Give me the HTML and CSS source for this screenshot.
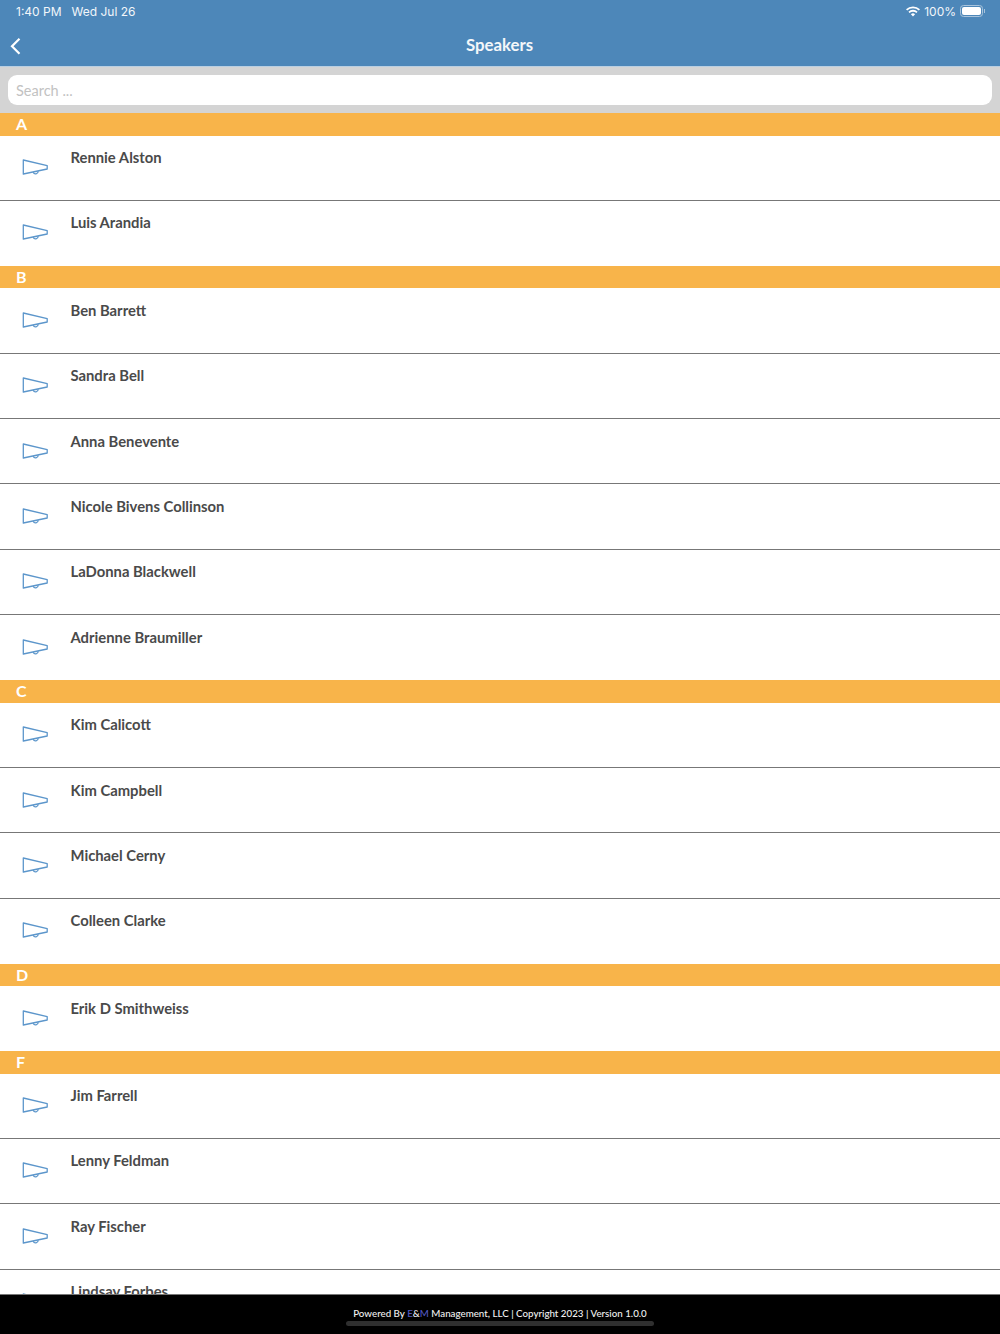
FILE: index.html
```html
<!DOCTYPE html>
<html lang="en">
<head>
<meta charset="utf-8">
<title>Speakers</title>
<link rel="stylesheet" href="styles.css">
</head>
<body>
<svg class="defs" width="0" height="0" aria-hidden="true">
  <symbol id="horn" viewBox="0 0 28 18">
    <path d="M2.3 1 L26.2 6.7 V10 L2.3 15 Z" fill="none" stroke="currentColor" stroke-width="1.3" stroke-linejoin="round"/>
    <path d="M12.2 13.3 A2.6 2.6 0 0 0 17.2 12.3" fill="none" stroke="currentColor" stroke-width="1.3"/>
  </symbol>
</svg>
<div class="app">
  <header class="topbar">
    <div class="status">
      <span class="status-time">1:40 PM</span>
      <span class="status-date">Wed Jul 26</span>
      <span class="status-right">
        <svg class="wifi" width="14" height="11" viewBox="0 0 14 11"><path d="M7 10.5 L4.9 8.3 A3 3 0 0 1 9.1 8.3 Z M3.6 7 L2.4 5.7 A6.6 6.6 0 0 1 11.6 5.7 L10.4 7 A4.9 4.9 0 0 0 3.6 7 Z M1.2 4.6 L0 3.3 A10 10 0 0 1 14 3.3 L12.8 4.6 A8.3 8.3 0 0 0 1.2 4.6 Z" fill="#fff"/></svg>
        <span>100%</span>
        <span class="battery"><span class="battery-fill"></span></span>
      </span>
    </div>
    <div class="nav">
      <svg class="back" width="12" height="18" viewBox="0 0 12 18"><path d="M9.5 1.8 L2 9.2 L9.5 16.8" fill="none" stroke="#fff" stroke-width="2.2"/></svg>
      <h1 class="title">Speakers</h1>
    </div>
  </header>
  <div class="searchbar"><div class="search">Search ...</div></div>
  <main class="list">
    <div class="letter">A</div>
    <div class="row"><svg class="horn"><use href="#horn"/></svg><span class="name">Rennie Alston</span></div>
    <div class="row"><svg class="horn"><use href="#horn"/></svg><span class="name">Luis Arandia</span></div>
    <div class="letter">B</div>
    <div class="row"><svg class="horn"><use href="#horn"/></svg><span class="name">Ben Barrett</span></div>
    <div class="row"><svg class="horn"><use href="#horn"/></svg><span class="name">Sandra Bell</span></div>
    <div class="row"><svg class="horn"><use href="#horn"/></svg><span class="name">Anna Benevente</span></div>
    <div class="row"><svg class="horn"><use href="#horn"/></svg><span class="name">Nicole Bivens Collinson</span></div>
    <div class="row"><svg class="horn"><use href="#horn"/></svg><span class="name">LaDonna Blackwell</span></div>
    <div class="row"><svg class="horn"><use href="#horn"/></svg><span class="name">Adrienne Braumiller</span></div>
    <div class="letter">C</div>
    <div class="row"><svg class="horn"><use href="#horn"/></svg><span class="name">Kim Calicott</span></div>
    <div class="row"><svg class="horn"><use href="#horn"/></svg><span class="name">Kim Campbell</span></div>
    <div class="row"><svg class="horn"><use href="#horn"/></svg><span class="name">Michael Cerny</span></div>
    <div class="row"><svg class="horn"><use href="#horn"/></svg><span class="name">Colleen Clarke</span></div>
    <div class="letter">D</div>
    <div class="row"><svg class="horn"><use href="#horn"/></svg><span class="name">Erik D Smithweiss</span></div>
    <div class="letter">F</div>
    <div class="row"><svg class="horn"><use href="#horn"/></svg><span class="name">Jim Farrell</span></div>
    <div class="row"><svg class="horn"><use href="#horn"/></svg><span class="name">Lenny Feldman</span></div>
    <div class="row"><svg class="horn"><use href="#horn"/></svg><span class="name">Ray Fischer</span></div>
    <div class="row"><svg class="horn"><use href="#horn"/></svg><span class="name">Lindsay Forbes</span></div>
  </main>
  <footer class="footer">
    <p class="credit">Powered By <span class="brand">E</span>&amp;<span class="brand">M</span> Management, LLC | Copyright 2023 | Version 1.0.0</p>
    <div class="home"></div>
  </footer>
</div>
</body>
</html>
```
FILE: styles.css
```css
* { box-sizing: border-box; }
html, body { margin: 0; padding: 0; background: #fff; }
.defs { display: block; height: 0; }
.app {
  width: 1000px;
  height: 1334px;
  display: flex;
  flex-direction: column;
  overflow: hidden;
  font-family: Lato, "Liberation Sans", sans-serif;
}
.topbar {
  height: 67px;
  flex: none;
  background: #4d87b9;
  border-bottom: 1px solid #b9cfe2;
  color: #fff;
  padding: 3px 15px 0 16px;
}
.status {
  height: 16px;
  display: flex;
  align-items: center;
  font-family: Inter, "Liberation Sans", sans-serif;
  font-size: 12px;
  color: #f2f6fa;
}
.status-date { margin-left: 10px; }
.status-right {
  margin-left: auto;
  display: flex;
  align-items: center;
  gap: 4px;
}
.battery {
  width: 23px;
  height: 12px;
  margin-right: 2px;
  border: 1px solid #a9c4dc;
  border-radius: 3.5px;
  padding: 1px;
  display: block;
  position: relative;
}
.battery::after {
  content: "";
  position: absolute;
  right: -3px;
  top: 3px;
  width: 1px;
  height: 4px;
  background: #a9c4dc;
}
.battery-fill {
  display: block;
  height: 100%;
  background: #fff;
  border-radius: 2px;
}
.nav {
  height: 47px;
  padding-top: 4px;
  display: flex;
  align-items: center;
  justify-content: center;
  position: relative;
}
.back { position: absolute; left: -6px; top: 18px; }
.title {
  margin: 0 2px 0 0;
  font-size: 16.8px;
  font-weight: 700;
  line-height: 20px;
  color: #f4f7fa;
}
.searchbar {
  flex: none;
  height: 46px;
  padding: 8px;
  background: #d4d4d4;
}
.search {
  height: 30px;
  border-radius: 9px;
  background: #fff;
  padding: 1px 8px 0;
  font-size: 14.5px;
  line-height: 30px;
  color: #c2c2c2;
}
.list { flex: 1; min-height: 0; overflow: hidden; }
.letter {
  height: 22.5px;
  background: #f8b44a;
  color: #fff;
  font-size: 16px;
  font-weight: 700;
  line-height: 22px;
  padding-left: 16px;
}
.row {
  height: 65.4px;
  display: flex;
  align-items: flex-start;
  border-bottom: 1px solid #777;
}
.row:has(+ .letter) { height: 64.9px; border-bottom: 0; }
.horn {
  width: 28px;
  height: 18px;
  flex: none;
  margin: 23.5px 0 0 21px;
  color: #5c96cb;
}
.name {
  margin: 11.5px 0 0 21.5px;
  font-size: 14.8px;
  font-weight: 700;
  line-height: 21px;
  color: #4a4a4a;
}
.footer {
  flex: none;
  height: 40px;
  background: #000;
  border-top: 1px solid #777;
  position: relative;
  text-align: center;
}
.credit {
  margin: 11px 0 0;
  font-size: 9.75px;
  line-height: 14px;
  font-weight: 500;
  color: #f0f0f0;
}
.brand { color: #5258c0; }
.home {
  position: absolute;
  left: 346px;
  bottom: 8px;
  width: 308px;
  height: 5px;
  border-radius: 3px;
  background: #2f2f2f;
}
```
